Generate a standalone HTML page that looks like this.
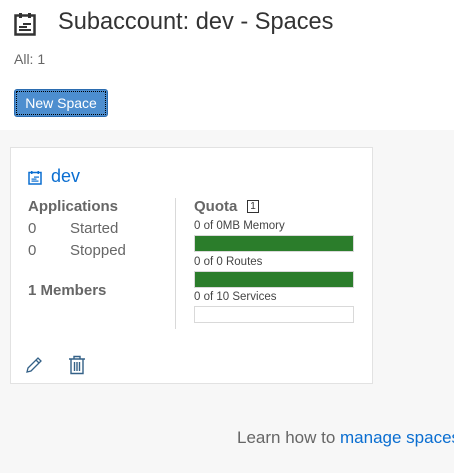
<!DOCTYPE html>
<html><head><style>
*{margin:0;padding:0;box-sizing:border-box}
body{width:454px;height:473px;overflow:hidden;background:#f7f7f7;font-family:"Liberation Sans",sans-serif;position:relative}
.top{position:absolute;left:0;top:0;width:454px;height:130px;background:#fff}
.abs{position:absolute;white-space:nowrap}
.card{position:absolute;left:10px;top:147px;width:363px;height:237px;background:#fff;border:1px solid #e2e2e2}
.bar{position:absolute;left:194px;width:160px;height:17px;border:1px solid #d9d9d9}
</style></head><body>
<div class="top"></div>
<svg class="abs" style="left:14px;top:12px" width="22" height="24" viewBox="0 0 22 24"><rect x="1.5" y="3.5" width="19" height="19" fill="none" stroke="#333" stroke-width="2.5"/><rect x="5" y="1" width="3" height="5" fill="#333"/><rect x="14" y="1" width="3" height="5" fill="#333"/><rect x="9" y="11" width="8" height="2" fill="#333"/><rect x="5" y="14" width="8" height="2" fill="#333"/><rect x="5" y="17" width="12" height="2" fill="#333"/></svg>
<div class="abs" style="left:58px;top:9px;font-size:23.6px;color:#333">Subaccount: dev - Spaces</div>
<div class="abs" style="left:14px;top:51px;font-size:14px;color:#666">All: 1</div>
<div class="abs" style="left:14px;top:89px;width:94px;height:28px;background:#4d8ecf;border:1px solid #2b6cb0;border-radius:3px;color:#fff;font-size:14px;line-height:26px;text-align:center;outline:1px dotted #000;outline-offset:-3px">New Space</div>
<div class="card"></div>
<svg class="abs" style="left:28px;top:170px" width="14" height="15" viewBox="0 0 14 15"><rect x="1" y="2.5" width="12" height="11.5" fill="none" stroke="#0a6ed1" stroke-width="1.5"/><rect x="3" y="1" width="1.5" height="3" fill="#0a6ed1"/><rect x="9.5" y="1" width="1.5" height="3" fill="#0a6ed1"/><rect x="6" y="6.5" width="5" height="1.2" fill="#0a6ed1"/><rect x="3.5" y="8.5" width="5" height="1.2" fill="#0a6ed1"/><rect x="3.5" y="10.5" width="7" height="1.2" fill="#0a6ed1"/></svg>
<div class="abs" style="left:51px;top:166px;font-size:18px;color:#0a6ed1">dev</div>
<div class="abs" style="left:28px;top:198px;font-size:15px;font-weight:bold;color:#666">Applications</div>
<div class="abs" style="left:28px;top:220px;font-size:15px;color:#666">0</div>
<div class="abs" style="left:70px;top:220px;font-size:15px;color:#666">Started</div>
<div class="abs" style="left:28px;top:242px;font-size:15px;color:#666">0</div>
<div class="abs" style="left:70px;top:242px;font-size:15px;color:#666">Stopped</div>
<div class="abs" style="left:28px;top:282px;font-size:15px;font-weight:bold;color:#666">1 Members</div>
<div class="abs" style="left:175px;top:198px;width:1px;height:131px;background:#d9d9d9"></div>
<div class="abs" style="left:194px;top:198px;font-size:15px;font-weight:bold;color:#666">Quota</div>
<div class="abs" style="left:247px;top:200px;width:12px;height:13px;border:1px solid #333;font-size:10px;line-height:11px;text-align:center;color:#333">1</div>
<div class="abs" style="left:194px;top:220px;font-size:11.5px;color:#444">0 of 0MB Memory</div>
<div class="bar" style="top:235px;background:#2b7d2b"></div>
<div class="abs" style="left:194px;top:256px;font-size:11.5px;color:#444">0 of 0 Routes</div>
<div class="bar" style="top:271px;background:#2b7d2b"></div>
<div class="abs" style="left:194px;top:291px;font-size:11.5px;color:#444">0 of 10 Services</div>
<div class="bar" style="top:306px;background:#fff"></div>
<svg class="abs" style="left:25px;top:356px" width="18" height="18" viewBox="0 0 18 18"><path d="M2 16 L3 12 L13 2 L16 5 L6 15 Z M11 4 L14 7" fill="none" stroke="#346187" stroke-width="1.3"/></svg>
<svg class="abs" style="left:68px;top:355px" width="18" height="20" viewBox="0 0 18 20"><path d="M1 4 H17 M6 4 V1.5 H12 V4 M3 4 V18.5 H15 V4 M6.5 7 V16 M9 7 V16 M11.5 7 V16" fill="none" stroke="#346187" stroke-width="1.4"/></svg>
<div class="abs" style="left:237px;top:428px;font-size:17px;color:#666">Learn how to <span style="color:#0a6ed1">manage spaces</span></div>
</body></html>
